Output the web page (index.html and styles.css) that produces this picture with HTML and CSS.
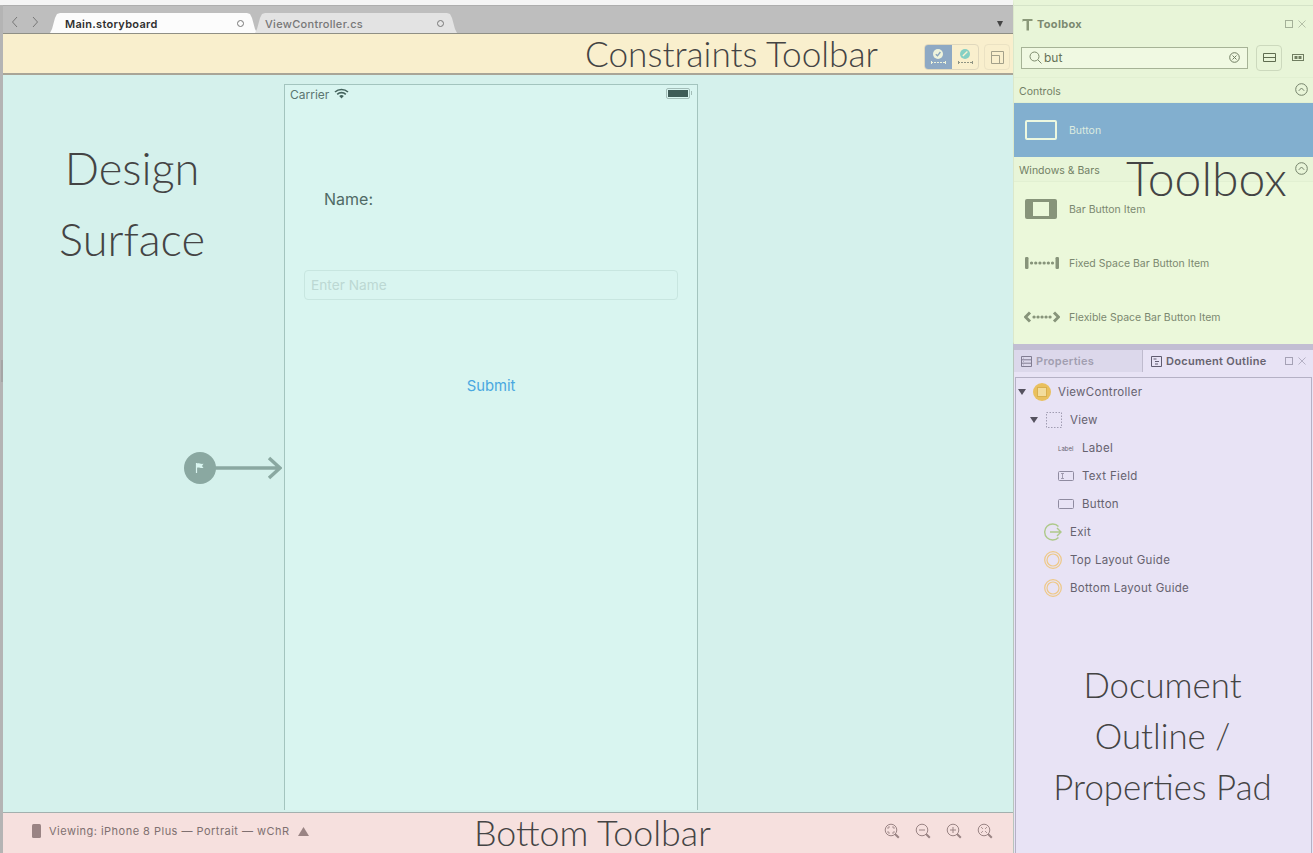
FILE: index.html
```html
<!DOCTYPE html>
<html>
<head>
<title>Main.storyboard</title>
<link rel="stylesheet" href="styles.css">
</head>
<body>
<div class="app">
  <div class="editor">
    <div class="top-strip"></div>
    <div class="tabbar">
      <div class="nav-arrows">
        <svg width="10" height="12" viewBox="0 0 10 12"><path d="M7 1 2.5 6 7 11" fill="none" stroke="#777" stroke-width="1"/></svg>
        <svg width="10" height="12" viewBox="0 0 10 12"><path d="M3 1 7.5 6 3 11" fill="none" stroke="#777" stroke-width="1"/></svg>
      </div>
      <div class="tab tab-active"><span>Main.storyboard</span><i class="tab-dot"></i></div>
      <div class="tab tab-other"><span>ViewController.cs</span><i class="tab-dot"></i></div>
      <div class="tab-menu"></div>
    </div>
    <div class="constraints">
      <div class="annot annot-constraints">Constraints Toolbar</div>
      <div class="seg">
        <div class="seg-btn seg-on">
          <svg width="24" height="22" viewBox="0 0 24 22"><circle cx="12" cy="8" r="5" fill="#eef3dc"/><path d="M9.800 8.200 11.500 9.800 14.400 6" fill="none" stroke="#8aa6bd" stroke-width="1.400"/><path d="M5.500 15v3M19.500 15v3" stroke="#eef3dc" fill="none"/><path d="M5 16.500h14" stroke="#eef3dc" stroke-dasharray="2 1" fill="none"/></svg>
        </div>
        <div class="seg-btn">
          <svg width="24" height="22" viewBox="0 0 24 22"><circle cx="12" cy="8" r="5" fill="#86d0c4"/><path d="M9.800 10 14.400 5.600" fill="none" stroke="#f8f0d0" stroke-width="1.400"/><path d="M5.500 15v3M19.500 15v3" stroke="#8f9484" fill="none"/><path d="M5 16.500h14" stroke="#8f9484" stroke-dasharray="2 1" fill="none"/></svg>
        </div>
      </div>
      <div class="layout-btn">
        <svg width="13" height="13" viewBox="0 0 13 13"><path d="M.5.500h12v12H.5zM.5 4.500h8v8" fill="none" stroke="#a3a08a"/></svg>
      </div>
    </div>
    <div class="surface">
      <div class="handle"></div>
      <div class="annot annot-design">Design<br>Surface</div>
      <div class="entry">
        <div class="entry-dot">
          <svg width="12" height="12" viewBox="0 0 12 12"><path d="M2.500 1v10" stroke="#d9f5f0" stroke-width="1.200"/><path d="M3 1.500c2 -.8 3 .8 6.500 .3L8 4l1.500 2C6 6.500 5 5 3 5.800z" fill="#d9f5f0"/></svg>
        </div>
        <svg class="entry-arrow" width="67" height="24" viewBox="0 0 67 24"><path d="M0 12h64M54 2 65 12 54 22" fill="none" stroke="#8aa8a1" stroke-width="3.500"/></svg>
      </div>
      <div class="phone">
        <div class="status">
          <span>Carrier</span>
          <svg class="wifi" width="15" height="11" viewBox="0 0 15 11"><path d="M1 4a9.500 9.500 0 0 1 13 0M3.200 6.300a6.300 6.300 0 0 1 8.600 0" fill="none" stroke="#43625c" stroke-width="1.600"/><path d="M5.200 8a3.400 3.400 0 0 1 4.600 0L7.500 10.400z" fill="#43625c"/></svg>
          <div class="battery"><i></i></div>
        </div>
        <div class="name-label">Name:</div>
        <div class="name-input">Enter Name</div>
        <div class="submit">Submit</div>
      </div>
    </div>
    <div class="bottom">
      <svg class="device" width="9" height="14" viewBox="0 0 9 14"><rect width="9" height="14" rx="1.500" fill="#9a8484"/></svg>
      <span class="viewing">Viewing: iPhone 8 Plus — Portrait — wChR</span>
      <svg class="up" width="11" height="9" viewBox="0 0 11 9"><path d="M5.500 0 11 9H0z" fill="#9a8484"/></svg>
      <div class="annot annot-bottom">Bottom Toolbar</div>
      <div class="zooms">
        <svg width="16" height="16" viewBox="0 0 16 16"><circle cx="7" cy="7" r="5.800" fill="none" stroke="#9a8484"/><path d="m11 11 3.800 3.800" stroke="#9a8484" stroke-width="2"/><path d="M4 6V4h2M8 4h2v2M10 8v2H8M6 10H4V8" fill="none" stroke="#9a8484" stroke-width=".8"/></svg>
        <svg width="16" height="16" viewBox="0 0 16 16"><circle cx="7" cy="7" r="5.800" fill="none" stroke="#9a8484"/><path d="m11 11 3.800 3.800" stroke="#9a8484" stroke-width="2"/><path d="M4 7h6" stroke="#9a8484"/></svg>
        <svg width="16" height="16" viewBox="0 0 16 16"><circle cx="7" cy="7" r="5.800" fill="none" stroke="#9a8484"/><path d="m11 11 3.800 3.800" stroke="#9a8484" stroke-width="2"/><path d="M4 7h6M7 4v6" stroke="#9a8484"/></svg>
        <svg width="16" height="16" viewBox="0 0 16 16"><circle cx="7" cy="7" r="5.800" fill="none" stroke="#9a8484"/><path d="m11 11 3.800 3.800" stroke="#9a8484" stroke-width="2"/><path d="M4 4l2 2M10 4 8 6M10 10 8 8M4 10l2-2" fill="none" stroke="#9a8484" stroke-width=".8"/></svg>
      </div>
    </div>
  </div>

  <div class="side">
    <div class="toolbox">
      <div class="pad-title">
        <svg width="11" height="13" viewBox="0 0 11 13"><path d="M.5 1h10v2H7v9.500H4.500V3H1.500L.5 4z" fill="#8a9879"/></svg>
        <b>Toolbox</b>
        <div class="pad-ctrls">
          <svg width="8" height="8" viewBox="0 0 8 8"><rect x=".5" y=".5" width="7" height="7" fill="none" stroke="#a4b098"/></svg>
          <svg width="8" height="8" viewBox="0 0 8 8"><path d="M.5.500l7 7M7.500.500l-7 7" stroke="#b5c0a8"/></svg>
        </div>
      </div>
      <div class="search-row">
        <div class="search">
          <svg width="13" height="13" viewBox="0 0 13 13"><circle cx="5.500" cy="5.500" r="4.500" fill="none" stroke="#7c8a6c"/><path d="m9 9 3.500 3.500" stroke="#7c8a6c"/></svg>
          <span>but</span>
          <svg class="clear" width="11" height="11" viewBox="0 0 11 11"><circle cx="5.500" cy="5.500" r="4.800" fill="none" stroke="#707d62"/><path d="m3.500 3.500 4 4M7.500 3.500l-4 4" stroke="#707d62"/></svg>
        </div>
        <div class="view-btn">
          <svg width="13" height="9" viewBox="0 0 13 9"><path d="M.5.500h12v8H.5zM.5 4.500h12" fill="none" stroke="#5f6d50" stroke-width="1"/></svg>
        </div>
        <svg class="view-alt" width="12" height="7" viewBox="0 0 12 7"><rect x=".5" y=".5" width="11" height="6" fill="none" stroke="#6f7d60"/><rect x="2.500" y="2" width="3" height="3" fill="#6f7d60"/><rect x="6.500" y="2" width="3" height="3" fill="#6f7d60"/></svg>
      </div>
      <div class="section">Controls
        <svg class="collapse" width="13" height="13" viewBox="0 0 13 13"><circle cx="6.500" cy="6.500" r="5.800" fill="none" stroke="#74826a"/><path d="M3.800 7.800 6.500 5l2.700 2.800" fill="none" stroke="#74826a"/></svg>
      </div>
      <div class="tool-item tool-selected">
        <div class="tool-icon"><div class="btn-outline"></div></div>
        <span>Button</span>
      </div>
      <div class="section section-wb">Windows &amp; Bars
        <svg class="collapse" width="13" height="13" viewBox="0 0 13 13"><circle cx="6.500" cy="6.500" r="5.800" fill="none" stroke="#74826a"/><path d="M3.800 7.800 6.500 5l2.700 2.800" fill="none" stroke="#74826a"/></svg>
      </div>
      <div class="annot annot-toolbox">Toolbox</div>
      <div class="tool-item">
        <div class="tool-icon"><div class="bar-btn"><i></i></div></div>
        <span>Bar Button Item</span>
      </div>
      <div class="tool-item">
        <div class="tool-icon">
          <svg width="34" height="12" viewBox="0 0 34 12"><rect x="0" y="0" width="3.500" height="12" rx="1.200" fill="#87947a"/><rect x="30.500" y="0" width="3.500" height="12" rx="1.200" fill="#87947a"/><path d="M6.500 6h21" stroke="#87947a" stroke-width="3.200" stroke-linecap="round" stroke-dasharray=".1 4.100"/></svg>
        </div>
        <span>Fixed Space Bar Button Item</span>
      </div>
      <div class="tool-item">
        <div class="tool-icon">
          <svg width="36" height="12" viewBox="0 0 36 12"><path d="M6 1.500 1.500 6 6 10.500M30 1.500 34.500 6 30 10.500" fill="none" stroke="#87947a" stroke-width="3"/><path d="M10 6h16.500" stroke="#87947a" stroke-width="3.200" stroke-linecap="round" stroke-dasharray=".1 3.900"/></svg>
        </div>
        <span>Flexible Space Bar Button Item</span>
      </div>
    </div>
    <div class="pads">
      <div class="pad-tabs">
        <div class="pad-tab pad-tab-off">
          <svg width="11" height="11" viewBox="0 0 11 11"><path d="M.5.500h10v10H.5zM.5 3.800h10M.5 7.200h10M2.500 2.200h.5M2.500 5.500h.5M2.500 8.900h.5" fill="none" stroke="#817d92"/></svg>
          Properties
        </div>
        <div class="pad-tab pad-tab-on">
          <svg width="11" height="11" viewBox="0 0 11 11"><path d="M.5.500h10v10H.5zM2.500 3h3M4 5.500h4M4 8h3" fill="none" stroke="#605c70"/></svg>
          Document Outline
          <div class="pad-ctrls">
            <svg width="8" height="8" viewBox="0 0 8 8"><rect x=".5" y=".5" width="7" height="7" fill="none" stroke="#a5a1b5"/></svg>
            <svg width="8" height="8" viewBox="0 0 8 8"><path d="M.5.500l7 7M7.500.500l-7 7" stroke="#b5b1c5"/></svg>
          </div>
        </div>
      </div>
      <div class="outline">
        <div class="tree-row lvl0">
          <i class="arrow"></i>
          <svg width="18" height="18" viewBox="0 0 18 18"><circle cx="9" cy="9" r="9" fill="#e9c05f"/><rect x="4.500" y="4.500" width="9" height="9" fill="#f2dc9d" stroke="#d9b04f"/></svg>
          <span>ViewController</span>
        </div>
        <div class="tree-row lvl1">
          <i class="arrow"></i>
          <svg width="16" height="16" viewBox="0 0 16 16"><rect x=".5" y=".5" width="15" height="15" fill="none" stroke="#a19db2" stroke-dasharray="1.500 1.500"/></svg>
          <span>View</span>
        </div>
        <div class="tree-row lvl2">
          <span class="mini-label">Label</span>
          <span>Label</span>
        </div>
        <div class="tree-row lvl2">
          <svg width="16" height="10" viewBox="0 0 16 10"><rect x=".5" y=".5" width="15" height="9" rx="1" fill="none" stroke="#8f8ba0"/><path d="M3 2.500h3M3 7.500h3M4.500 2.500v5" stroke="#8f8ba0" stroke-width=".8" fill="none"/></svg>
          <span>Text Field</span>
        </div>
        <div class="tree-row lvl2">
          <svg width="16" height="10" viewBox="0 0 16 10"><rect x=".5" y=".5" width="15" height="9" rx="1" fill="none" stroke="#8f8ba0"/></svg>
          <span>Button</span>
        </div>
        <div class="tree-row lvl1b">
          <svg width="18" height="18" viewBox="0 0 18 18"><path d="M14.500 3.500a8 8 0 1 0 0 11" fill="none" stroke="#aec98b" stroke-width="1.400"/><path d="M6 9h11M13 5 17 9l-4 4" fill="none" stroke="#aec98b" stroke-width="1.400"/></svg>
          <span>Exit</span>
        </div>
        <div class="tree-row lvl1b">
          <svg width="18" height="18" viewBox="0 0 18 18"><circle cx="9" cy="9" r="8.300" fill="none" stroke="#eec887" stroke-width="1.200"/><circle cx="9" cy="9" r="6" fill="none" stroke="#eec887" stroke-width="1.200"/></svg>
          <span>Top Layout Guide</span>
        </div>
        <div class="tree-row lvl1b">
          <svg width="18" height="18" viewBox="0 0 18 18"><circle cx="9" cy="9" r="8.300" fill="none" stroke="#eec887" stroke-width="1.200"/><circle cx="9" cy="9" r="6" fill="none" stroke="#eec887" stroke-width="1.200"/></svg>
          <span>Bottom Layout Guide</span>
        </div>
        <div class="annot annot-outline">Document<br>Outline /<br>Properties Pad</div>
      </div>
    </div>
  </div>
</div>
</body>
</html>
```

FILE: styles.css
```css
html, body {
  margin: 0;
  height: 100%;
  overflow: hidden;
}
body {
  font-family: Inter, "Liberation Sans", sans-serif;
  font-size: 11px;
  color: #555;
}
.app {
  display: flex;
  width: 1313px;
  height: 853px;
}
.annot {
  font-family: Lato, "Liberation Sans", sans-serif;
  font-weight: 300;
  color: #444;
  white-space: nowrap;
}

/* left side */
.editor {
  width: 1013px;
  height: 853px;
  display: flex;
  flex-direction: column;
  position: relative;
  background: #b4b4b4;
}
.top-strip {
  height: 5px;
  background: #f5f5f5;
}
.tabbar {
  height: 28px;
  margin-left: 3px;
  background: #bebebe;
  border-top: 1px solid #aeaeae;
  box-sizing: border-box;
  display: flex;
  align-items: flex-end;
  position: relative;
}
.nav-arrows {
  width: 47px;
  flex-shrink: 0;
  display: flex;
  gap: 10px;
  padding: 0 0 5px 7px;
  box-sizing: border-box;
}
.tab {
  height: 20px;
  display: flex;
  align-items: center;
  justify-content: space-between;
  box-sizing: border-box;
  font-size: 11px;
  padding: 1px 13px 0 15px;
  letter-spacing: .3px;
  clip-path: polygon(0 100%, 2px 80%, 5px 25%, 7px 5%, 10px 0, calc(100% - 10px) 0, calc(100% - 7px) 5%, calc(100% - 5px) 25%, calc(100% - 2px) 80%, 100% 100%);
}
.tab-active {
  width: 207px;
  background: #fcfcfc;
  color: #2f2f2f;
  font-weight: 600;
}
.tab-other {
  width: 202px;
  margin-left: -2px;
  background: #e3e3e3;
  color: #777;
  font-weight: 500;
  padding-left: 10px;
}
.tab-dot {
  width: 5px;
  height: 5px;
  border: 1.200px solid #777;
  border-radius: 50%;
}
.tab-menu {
  position: absolute;
  right: 10px;
  top: 15px;
  border-left: 3.500px solid transparent;
  border-right: 3.500px solid transparent;
  border-top: 6px solid #444;
}
.constraints {
  height: 42px;
  margin-left: 3px;
  background: #f9efcd;
  border-top: 1px solid #8f8f85;
  border-bottom: 2px solid #a9a597;
  box-sizing: border-box;
  display: flex;
  align-items: center;
  padding-right: 3px;
}
.annot-constraints {
  font-size: 35.200px;
  line-height: 39px;
  margin-left: 582px;
  width: 339px;
}
.seg {
  display: flex;
  height: 26px;
  width: 55px;
  align-self: flex-end;
  margin-bottom: 3px;
  border-radius: 4px;
  overflow: hidden;
  border: 1px solid #e0d8bd;
  box-sizing: border-box;
}
.seg-btn {
  flex: 1;
  display: flex;
  align-items: center;
  justify-content: center;
}
.seg-on {
  background: #8ea9c4;
}
.layout-btn {
  width: 26px;
  height: 26px;
  margin-left: 5px;
  align-self: flex-end;
  margin-bottom: 3px;
  border: 1px solid #ebe2c3;
  border-radius: 4px;
  box-sizing: border-box;
  display: flex;
  align-items: center;
  justify-content: center;
}
.surface {
  flex: 1;
  min-height: 0;
  margin-left: 3px;
  background: #d5f1ec;
  position: relative;
  padding: 9px 0 0 281px;
}
.handle {
  position: absolute;
  left: -2px;
  top: 285px;
  width: 2px;
  height: 22px;
  background: #a5a5a5;
}
.annot-design {
  position: absolute;
  left: 42px;
  top: 57px;
  width: 174px;
  text-align: center;
  font-size: 45.200px;
  line-height: 71px;
}
.entry {
  position: absolute;
  left: 181px;
  top: 377px;
  display: flex;
  align-items: center;
}
.entry-dot {
  width: 32px;
  height: 32px;
  border-radius: 50%;
  background: #8aa8a1;
  display: flex;
  align-items: center;
  justify-content: center;
}
.entry-arrow {
  margin-left: -1px;
}
.phone {
  width: 414px;
  height: 726px;
  box-sizing: border-box;
  background: #d9f5f0;
  border: 1px solid #a3c4be;
  border-bottom: 0;
  color: #4f6a65;
}
.status {
  height: 19px;
  display: flex;
  align-items: center;
  padding: 0 7px 0 5px;
  font-size: 12px;
  color: #5c7570;
}
.wifi {
  margin: -2px 0 0 5px;
}
.battery {
  margin-left: auto;
  margin-top: -2px;
  width: 24px;
  height: 11px;
  box-sizing: border-box;
  border: 1px solid #a3bdb8;
  border-radius: 2px;
  padding: 1px;
  position: relative;
}
.battery:after {
  content: "";
  position: absolute;
  right: -3px;
  top: 2px;
  width: 1px;
  height: 4px;
  background: #a3bdb8;
}
.battery i {
  display: block;
  height: 100%;
  background: #3f5c57;
}
.name-label {
  margin: 85px 0 0 39px;
  font-size: 16px;
  line-height: 20px;
}
.name-input {
  margin: 61px 19px 0;
  height: 30px;
  box-sizing: border-box;
  border: 1px solid #c8e6e0;
  border-radius: 4px;
  padding: 0 6px;
  line-height: 28px;
  font-size: 13.700px;
  color: #bcd8d3;
}
.submit {
  margin-top: 76px;
  text-align: center;
  color: #4aa8e0;
  font-size: 14.800px;
  line-height: 20px;
}
.bottom {
  height: 41px;
  margin-left: 3px;
  background: #f6e0de;
  border-top: 1px solid #a3b0ae;
  box-sizing: border-box;
  display: flex;
  align-items: center;
  position: relative;
  padding: 0 0 4px 29px;
  color: #7f7070;
}
.viewing {
  margin-left: 8px;
  letter-spacing: .48px;
}
.up {
  margin-left: 8px;
}
.annot-bottom {
  position: absolute;
  left: 471px;
  top: 1px;
  font-size: 35.800px;
  line-height: 38px;
}
.zooms {
  margin-left: auto;
  margin-right: 20px;
  display: flex;
  gap: 15px;
}

/* right side */
.side {
  width: 300px;
  height: 853px;
  display: flex;
  flex-direction: column;
  background: #fff;
}
.toolbox {
  height: 344px;
  box-sizing: border-box;
  background: #e8f5d8;
  border-top: 5px solid #e8f5d8;
  border-bottom: 2px solid #c9d6b8;
  border-left: 1px solid #dbe8cb;
  position: relative;
  color: #6f7d60;
}
.pad-title {
  height: 37px;
  border-top: 1px solid #d5e3c8;
  box-sizing: border-box;
  display: flex;
  align-items: center;
  padding: 0 7px 0 9px;
  gap: 4px;
  letter-spacing: .3px;
  color: #7b8970;
}
.pad-title > svg {
  margin-left: -1px;
}
.pad-ctrls {
  margin-left: auto;
  display: flex;
  gap: 5px;
}
.search-row {
  height: 36px;
  display: flex;
  align-items: center;
  padding: 0 9px 4px 7px;
  border-bottom: 1px solid #e2f0d2;
  box-sizing: border-box;
}
.search {
  width: 227px;
  height: 22px;
  box-sizing: border-box;
  border: 1px solid #a6b396;
  background: #f0f9e2;
  display: flex;
  align-items: center;
  padding: 0 7px;
  gap: 2px;
  font-size: 12px;
  color: #667358;
}
.clear {
  margin-left: auto;
}
.view-btn {
  width: 26px;
  height: 26px;
  margin-left: 8px;
  box-sizing: border-box;
  border: 1px solid #ccd9bd;
  border-radius: 4px;
  display: flex;
  align-items: center;
  justify-content: center;
}
.view-alt {
  margin-left: auto;
}
.section {
  height: 25px;
  box-sizing: border-box;
  padding: 2px 5px 0 5px;
  display: flex;
  align-items: center;
  justify-content: space-between;
  font-size: 10.500px;
  color: #727f65;
  border-bottom: 1px solid #e2f0d2;
}
.collapse {
  margin-top: -3px;
}
.tool-item {
  height: 54px;
  display: flex;
  align-items: center;
  background: #ebf8da;
  color: #7b8870;
  font-size: 10.500px;
}
.tool-icon {
  width: 55px;
  display: flex;
  justify-content: center;
}
.tool-selected {
  background: #82afcf;
  color: #dcebe0;
}
.btn-outline {
  width: 32px;
  height: 20px;
  box-sizing: border-box;
  border: 2px solid #edf8e0;
  border-radius: 2px;
  margin-left: -1px;
}
.bar-btn {
  width: 32px;
  height: 20px;
  background: #87947a;
  border-radius: 2px;
  padding: 3px 8px;
  box-sizing: border-box;
  margin-left: -1px;
}
.bar-btn i {
  display: block;
  height: 100%;
  background: #ebf8da;
}
.annot-toolbox {
  position: absolute;
  left: 112px;
  top: 143px;
  font-size: 48px;
  line-height: 60px;
}
.pads {
  flex: 1;
  min-height: 0;
  background: #e8e3f5;
  display: flex;
  flex-direction: column;
  border-left: 1px solid #b8c4bd;
  color: #66626f;
  border-top: 6px solid #c2bed3;
}
.pad-tabs {
  height: 22px;
  display: flex;
  font-weight: 600;
  letter-spacing: .3px;
}
.pad-tab {
  display: flex;
  align-items: center;
  gap: 4px;
  box-sizing: border-box;
  padding: 0 6px 0 7px;
}
.pad-tab-off {
  width: 129px;
  background: #dcd8eb;
  color: #a19eb0;
  border-right: 1px solid #bfbbce;
}
.pad-tab-on {
  flex: 1;
  padding: 0 7px 0 8px;
}
.outline {
  flex: 1;
  min-height: 0;
  margin: 5px 1px 0 1px;
  border: 1px solid #b5b1c5;
  border-bottom: 0;
  position: relative;
  display: flex;
  flex-direction: column;
}
.tree-row {
  height: 28px;
  display: flex;
  align-items: center;
  letter-spacing: .3px;
  gap: 8px;
  font-size: 11.500px;
  flex-shrink: 0;
}
.arrow {
  width: 0;
  height: 0;
  border-left: 4px solid transparent;
  border-right: 4px solid transparent;
  border-top: 6px solid #55525f;
}
.lvl0 {
  padding-left: 2px;
  gap: 7px;
}
.lvl1 {
  padding-left: 14px;
}
.lvl1b {
  padding-left: 28px;
}
.lvl2 {
  padding-left: 42px;
}
.mini-label {
  font-size: 6px;
  width: 16px;
  letter-spacing: 0;
}
.annot-outline {
  position: absolute;
  left: 0;
  right: 0;
  top: 281px;
  text-align: center;
  font-size: 34.800px;
  line-height: 51px;
  padding-right: 2px;
}
```
